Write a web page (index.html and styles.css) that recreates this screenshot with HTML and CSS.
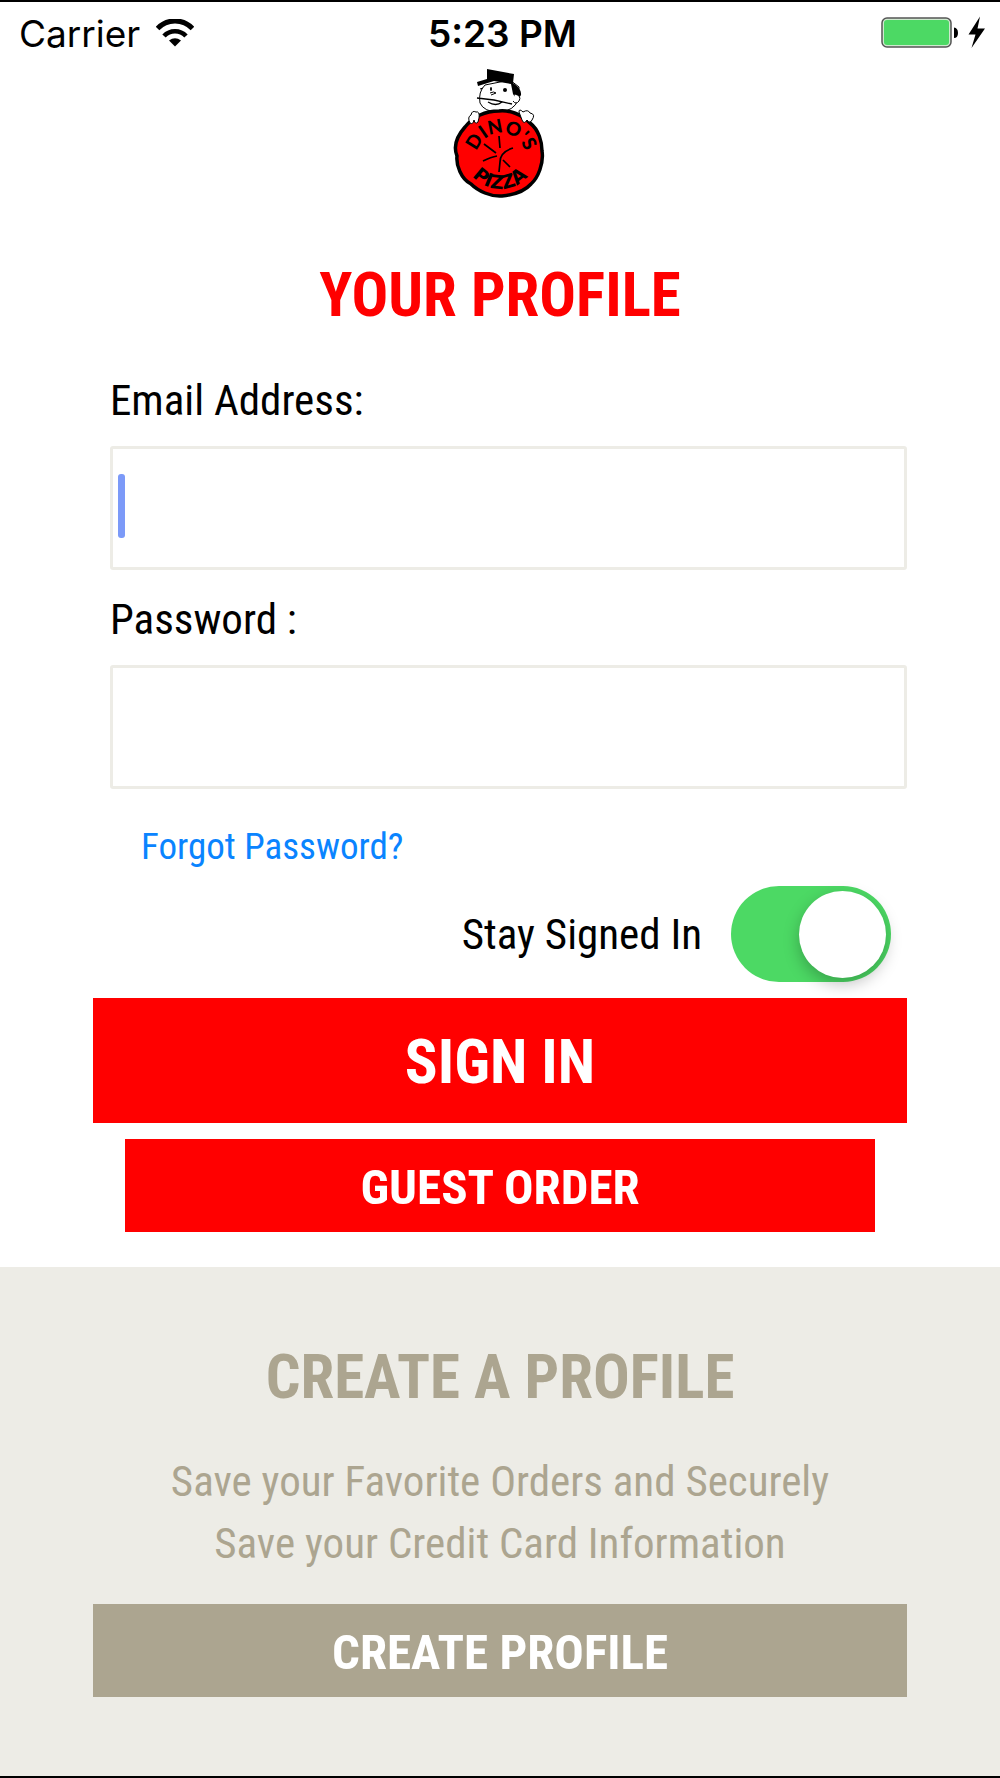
FILE: index.html
```html
<!DOCTYPE html>
<html lang="en">
<head>
<meta charset="utf-8">
<meta name="viewport" content="width=device-width, initial-scale=1">
<title>Dino's Pizza – Your Profile</title>
<link rel="stylesheet" href="styles.css">
</head>
<body>
<div class="screen">
  <header class="status-bar">
    <div class="status-left">
      <span class="carrier">Carrier</span>
      <svg class="wifi" viewBox="0 0 38 28" aria-hidden="true">
        <path d="M1.500 9.500A24 24 0 0 1 36.500 9.500" fill="none" stroke="#000" stroke-width="5"/>
        <path d="M8 17A15 15 0 0 1 30 17" fill="none" stroke="#000" stroke-width="4.600"/>
        <path d="M13 21.500Q19 17 25 21.500L19 27.500Z"/>
      </svg>
    </div>
    <span class="clock">5:23 PM</span>
    <div class="status-right">
      <svg class="battery" viewBox="0 0 106 34" aria-label="Battery full, charging">
        <rect x="2" y="2" width="69" height="29" rx="5" fill="#cfe8cf" stroke="#555" stroke-width="1.500"/>
        <rect x="4" y="4" width="65" height="25" rx="3" fill="#4cd964"/>
        <path d="M74 11.500Q78 12 78 17T74 22Z"/>
        <path d="M100 0.500L88.500 18.500L95.500 18.500L91.500 32L105 12.500L97.500 12.500Z"/>
      </svg>
    </div>
  </header>

  <main>
    <svg class="logo" viewBox="0 0 120 145" role="img" aria-label="Dino's Pizza">
      <path d="M45 25Q38 32 40 43Q44 52 59 52Q74 51 78 40L79 27L70 20Z" fill="#fff" stroke="#000"/>
      <path d="M47 9L74 14L73 23Q82 29 81 35Q79 39 77 40L73 34L71 24L54 21L38 26L37 22L47 19Z"/>
      <path d="M75 34Q82 36 79 41Q76 45 73 41" fill="#fff" stroke="#000"/>
      <path d="M40 29l3-1M50 33q4-2 6 0l-5 2" fill="none" stroke="#000"/>
      <ellipse cx="51" cy="29" rx="1" ry="2"/><ellipse cx="65" cy="30" rx="2" ry="2"/>
      <path d="M37 38l17 2 18 4M48 42q8 5 14 0" fill="none" stroke="#000" stroke-width="1.300"/>
      <path d="M59 51C69 50 82 54 90 63C99 70 102 82 102 91C104 103 98 118 91 124C84 132 72 135 62 136C51 137 38 131 31 124C21 119 16 105 17 96C13 86 17 76 25 67C34 56 45 51 59 51Z" fill="red" stroke="#000" stroke-width="3.500"/>
      <path d="M30 63Q27 57 31 55Q32 50 36 52Q40 51 39 58L38 62Q35 65 34 60Q33 65 30 63Z" fill="#fff" stroke="#000"/>
      <path d="M79 52Q79 48 83 52Q88 49 90 53Q96 54 92 60Q90 64 87 60Q84 65 82 60Z" fill="#fff" stroke="#000"/>
      <path d="M59 76L60 88M44 84L56 93M73 88Q60 92 60 102L59 112M57 96Q51 97 43 101M63 100L70 107" fill="none" stroke="#000" stroke-width="1.700"/>
      <path id="arc-top" d="M36 98A25 25 0 1 1 86 98" fill="none"/>
      <path id="arc-bottom" d="M24 93A36 36 0 0 0 96 93" fill="none"/>
      <text class="logo-text"><textPath href="#arc-top" startOffset="50%">DINO'S</textPath></text>
      <text class="logo-text logo-text-wide"><textPath href="#arc-bottom" startOffset="50%">PIZZA</textPath></text>
    </svg>

    <form class="sign-in">
      <h1 class="title">YOUR PROFILE</h1>
      <div class="fields">
        <label class="label" for="email">Email Address:</label>
        <div class="field">
          <input class="input" id="email" type="email">
          <span class="caret"></span>
        </div>
        <label class="label" for="password">Password :</label>
        <div class="field">
          <input class="input" id="password" type="password">
        </div>
        <a class="forgot" href="#forgot">Forgot Password?</a>
        <div class="stay">
          <label for="stay">Stay Signed In</label>
          <input class="switch" id="stay" type="checkbox" role="switch" checked>
        </div>
      </div>
      <button class="btn btn-primary" type="submit">SIGN IN</button>
      <button class="btn btn-guest" type="button">GUEST ORDER</button>
    </form>

    <section class="create">
      <h2 class="title title-muted">CREATE A PROFILE</h2>
      <p class="pitch">Save your Favorite Orders and Securely<br>Save your Credit Card Information</p>
      <button class="btn btn-create" type="button">CREATE PROFILE</button>
    </section>
  </main>
</div>
</body>
</html>
```
FILE: styles.css
```css
* {
  box-sizing: border-box;
}

body {
  margin: 0;
  background: #fff;
  color: #000;
  font-family: "Roboto Condensed", "Liberation Sans Narrow", Roboto, sans-serif;
}

.screen {
  display: flex;
  flex-direction: column;
  min-height: 100vh;
  border-top: 2px solid #000;
  border-bottom: 2px solid #000;
}

main {
  display: flex;
  flex: 1;
  flex-direction: column;
}

/* Status bar */
.status-bar {
  display: grid;
  grid-template-columns: 1fr auto 1fr;
  align-items: center;
  height: 58px;
  padding: 4px 14px 0 19px;
  font-family: Inter, sans-serif;
  font-size: 37px;
}

.status-left {
  display: flex;
  align-items: center;
  gap: 16px;
}

.clock {
  font-weight: 600;
}

.status-right {
  display: flex;
  justify-content: flex-end;
}

.wifi {
  width: 38px;
  height: 28px;
}

.battery {
  width: 106px;
  height: 34px;
}

/* Logo */
.logo {
  align-self: center;
  width: 120px;
  height: 145px;
}

.logo-text {
  font-family: Lato, sans-serif;
  font-size: 19px;
  font-weight: 900;
  text-anchor: middle;
}

.logo-text-wide {
  font-family: "DejaVu Sans", sans-serif;
}

/* Sign-in form */
.sign-in {
  display: flex;
  flex-direction: column;
  padding: 50px 93px 35px;
}

.title {
  margin: 0;
  color: #f00;
  font-size: 61px;
  font-weight: 700;
  line-height: 80px;
  text-align: center;
}

.fields {
  display: flex;
  flex-direction: column;
  padding: 31px 0 16px 17px;
}

.label,
.stay {
  font-size: 43px;
}

.label {
  line-height: 68px;
  padding-bottom: 12px;
}

.field {
  position: relative;
  margin-bottom: 15px;
}

.input {
  display: block;
  width: 100%;
  height: 124px;
  padding: 0 8px;
  border: 3px solid #edece6;
  border-radius: 3px;
  background: #fff;
  font: inherit;
  font-size: 43px;
  outline: none;
}

.caret {
  position: absolute;
  top: 28px;
  left: 8px;
  width: 7px;
  height: 64px;
  border-radius: 3px;
  background: #7c9af8;
}

.forgot {
  align-self: flex-start;
  margin: 9px 0 0 31px;
  color: #0a84ff;
  font-size: 37px;
  line-height: 68px;
  text-decoration: none;
}

.stay {
  display: flex;
  align-items: center;
  justify-content: flex-end;
  gap: 29px;
  margin-top: 5px;
  padding-right: 16px;
}

.switch {
  position: relative;
  width: 160px;
  height: 96px;
  margin: 0;
  border-radius: 48px;
  background: #4cd964;
  appearance: none;
}

.switch::after {
  position: absolute;
  top: 5px;
  right: 5px;
  width: 87px;
  height: 87px;
  border-radius: 50%;
  background: #fff;
  box-shadow: 0 6px 16px rgba(0, 0, 0, 0.25);
  content: "";
}

/* Buttons */
.btn {
  height: 93px;
  padding: 3px 0 0;
  border: 0;
  border-radius: 0;
  background: #f00;
  color: #fff;
  font-family: inherit;
  font-size: 49px;
  font-weight: 700;
}

.btn-primary {
  height: 125px;
  font-size: 61px;
}

.btn-guest {
  margin: 16px 32px 0;
}

/* Create profile */
.create {
  display: flex;
  flex: 1;
  flex-direction: column;
  padding: 70px 93px 78px;
  background: #edece6;
}

.title-muted,
.pitch {
  color: #aca590;
}

.pitch {
  margin: 33px 0 30px;
  font-size: 43px;
  line-height: 62px;
  text-align: center;
}

.btn-create {
  background: #aca590;
}
```
